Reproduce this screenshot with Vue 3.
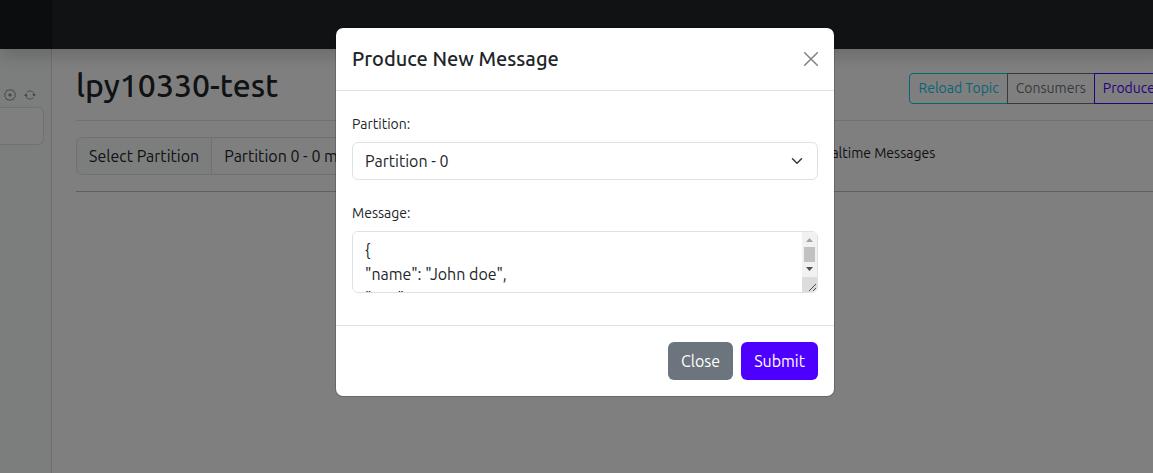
<script setup>
import { ref } from 'vue'

const partition = ref('0')
const target = ref('0')
const realtime = ref(false)
const search = ref('')
const message = ref('{\n"name": "John doe",\n"age": 25\n}')
</script>

<template>
  <div class="page">
    <header class="topbar">
      <div class="brand"></div>
    </header>
    <div class="layout">
      <aside class="sidebar">
        <div class="tools">
          <button class="icon-button" type="button" aria-label="Add topic">
            <svg viewBox="0 0 24 24" fill="none" stroke="currentColor" stroke-width="1.6">
              <path d="M12 1l3 1.600 3.700.2 1.300 3.400 2.600 2.400-.8 3.400.8 3.400-2.600 2.400-1.300 3.400-3.700.2-3 1.600-3-1.600-3.700-.2L4 17.800l-2.600-2.400.8-3.400-.8-3.400L4 6.200l1.300-3.400L9 2.600z" />
              <path d="M12 8.500v7M8.500 12h7" stroke-width="2" />
            </svg>
          </button>
          <button class="icon-button" type="button" aria-label="Refresh topics">
            <svg viewBox="0 0 16 16" fill="currentColor">
              <path d="M11.534 7h3.932a.25.25 0 0 1 .192.410l-1.966 2.360a.25.25 0 0 1-.384 0l-1.966-2.360a.25.25 0 0 1 .192-.410zm-11 2h3.932a.25.25 0 0 0 .192-.410L2.692 6.230a.25.25 0 0 0-.384 0L.342 8.590A.25.25 0 0 0 .534 9z" />
              <path d="M8 3c-1.552 0-2.940.707-3.857 1.818a.5.5 0 1 1-.771-.636A6.002 6.002 0 0 1 13.917 7H12.900A5.002 5.002 0 0 0 8 3zM3.100 9a5.002 5.002 0 0 0 8.757 2.182.5.5 0 1 1 .771.636A6.002 6.002 0 0 1 2.083 9H3.100z" />
            </svg>
          </button>
        </div>
        <input v-model="search" class="search" type="text" aria-label="Filter topics" />
      </aside>
      <main class="content">
        <div class="heading">
          <h1>lpy10330-test</h1>
          <div class="actions">
            <button class="action info" type="button">Reload Topic</button>
            <button class="action muted" type="button">Consumers</button>
            <button class="action primary" type="button">Produce</button>
          </div>
        </div>
        <div class="filters">
          <div class="group">
            <label for="view-partition">Select Partition</label>
            <select id="view-partition" v-model="partition">
              <option value="0">Partition 0 - 0 messages</option>
            </select>
          </div>
          <div class="live">
            <input id="realtime" v-model="realtime" type="checkbox" />
            <label for="realtime">Realtime Messages</label>
          </div>
        </div>
      </main>
    </div>

    <div class="backdrop">
      <form class="modal" role="dialog" aria-labelledby="modal-title" @submit.prevent>
        <div class="modal-header">
          <h2 id="modal-title">Produce New Message</h2>
          <button class="dismiss" type="button" aria-label="Dismiss">
            <svg viewBox="0 0 14 14" fill="none" stroke="currentColor" stroke-width="1.5" stroke-linecap="round">
              <path d="M.7.7l12.600 12.600M13.300.7L.7 13.300" />
            </svg>
          </button>
        </div>
        <div class="modal-body">
          <div class="field">
            <label for="target-partition">Partition:</label>
            <div class="control">
              <select id="target-partition" v-model="target">
                <option value="0">Partition - 0</option>
              </select>
              <svg class="chevron" viewBox="0 0 16 16" fill="none" stroke="#343a40" stroke-width="2" stroke-linecap="round" stroke-linejoin="round">
                <path d="m2 5 6 6 6-6" />
              </svg>
            </div>
          </div>
          <div class="field">
            <label for="message">Message:</label>
            <div class="control">
              <textarea id="message" v-model="message" rows="2"></textarea>
              <svg class="scrollbar" viewBox="0 0 15 60" aria-hidden="true">
                <path d="M0 0h15v45H0z" fill="#f1f1f1" />
                <path d="M7.500 6L11 10H4z" fill="#a3a3a3" />
                <path d="M2 15h11v15H2z" fill="#c1c1c1" />
                <path d="M7.500 39L11 35H4z" fill="#505050" />
                <path d="M0 45h15v15H0z" fill="#dcdcdc" />
                <path d="M7 59l7-7M11 59l3-3" stroke="#505050" stroke-width="1" />
              </svg>
            </div>
          </div>
        </div>
        <div class="modal-footer">
          <button class="button secondary" type="button">Close</button>
          <button class="button submit" type="submit">Submit</button>
        </div>
      </form>
    </div>
  </div>
</template>

<style>
body {
  margin: 0;
  overflow: hidden;
}
</style>

<style scoped>
* {
  box-sizing: border-box;
}
.page {
  position: relative;
  width: calc(100% + 17px);
  min-height: 100vh;
  display: flex;
  flex-direction: column;
  font-family: Ubuntu, "Noto Sans", "Open Sans", sans-serif;
  font-size: 16px;
  line-height: 24px;
  color: #212529;
  background: #fff;
}
button,
input,
select,
textarea {
  font: inherit;
  color: inherit;
  margin: 0;
}
.topbar {
  position: relative;
  z-index: 1;
  height: 49px;
  display: flex;
  background: #212529;
  box-shadow: 0 8px 16px rgba(0, 0, 0, 0.15);
}
.brand {
  width: 52px;
  background: rgba(0, 0, 0, 0.25);
  border-right: 1px solid #111315;
}
.layout {
  flex: 1;
  display: flex;
}
.sidebar {
  flex: 0 0 52px;
  padding-top: 39px;
  background: #f8fcfa;
  border-right: 1px solid #dcdfe2;
}
.tools {
  display: flex;
  gap: 8px;
  padding-left: 4px;
  height: 19px;
}
.icon-button {
  width: 12px;
  height: 14px;
  padding: 1px 0;
  border: 0;
  background: none;
  color: #6c757d;
}
.icon-button svg {
  display: block;
  width: 12px;
  height: 12px;
}
.search {
  display: block;
  width: 44px;
  height: 38px;
  border: 1px solid #dee2e6;
  border-left: 0;
  border-radius: 0 6px 6px 0;
  background: #fff;
}
.content {
  flex: 1;
  min-width: 0;
  padding-left: 24px;
}
.heading {
  display: flex;
  justify-content: space-between;
  align-items: flex-end;
  height: 72px;
  padding: 0 6px 16px 0;
  border-bottom: 1px solid #dee2e6;
}
h1 {
  margin: 0;
  font-size: 32px;
  font-weight: 500;
  line-height: 38px;
}
.actions {
  display: flex;
}
.action {
  height: 31px;
  padding: 4px 8px;
  border: 1px solid currentColor;
  background: none;
  font-size: 14px;
  line-height: 21px;
  white-space: nowrap;
}
.action + .action {
  margin-left: -1px;
}
.info {
  color: #0dcaf0;
  border-radius: 4px 0 0 4px;
}
.muted {
  color: #6c757d;
}
.primary {
  color: #4d00ff;
  border-radius: 0 4px 4px 0;
}
.filters {
  display: flex;
  align-items: flex-start;
  gap: 16px;
  padding: 16px 0;
  border-bottom: 1px solid #bcbec0;
}
.group {
  display: flex;
  flex: 0 1 704px;
  height: 38px;
}
.group label {
  padding: 6px 12px;
  border: 1px solid #dee2e6;
  border-radius: 6px 0 0 6px;
  background: #f8fcfa;
  white-space: nowrap;
}
.group select {
  flex: 1;
  min-width: 0;
  margin-left: -1px;
  padding: 6px 12px;
  appearance: none;
  border: 1px solid #dee2e6;
  border-radius: 0 6px 6px 0;
  background: #fff;
}
.live {
  display: flex;
  align-items: center;
  gap: 6px;
  height: 32px;
  font-size: 14px;
}
.backdrop {
  position: absolute;
  inset: 0;
  z-index: 2;
  padding-top: 27px;
  background: rgba(0, 0, 0, 0.5);
}
.modal {
  max-width: 500px;
  margin: 0 auto;
  border: 1px solid rgba(0, 0, 0, 0.175);
  border-radius: 8px;
  background: #fff;
  background-clip: padding-box;
}
.modal-header {
  display: flex;
  align-items: center;
  justify-content: space-between;
  padding: 16px;
  border-bottom: 1px solid #dee2e6;
}
h2 {
  margin: 0;
  font-size: 20px;
  font-weight: 500;
  line-height: 30px;
}
.dismiss {
  display: flex;
  padding: 0;
  border: 0;
  background: none;
  color: #808080;
}
.dismiss svg {
  width: 14px;
  height: 14px;
}
.modal-body {
  padding: 16px 16px 0;
}
.field {
  padding-bottom: 16px;
}
.field:last-child {
  padding-bottom: 32px;
}
.field label {
  display: block;
  padding: 7px 0;
  font-size: 14px;
  line-height: 21px;
}
.control {
  position: relative;
}
.control select {
  display: block;
  width: 100%;
  height: 38px;
  padding: 6px 36px 6px 12px;
  appearance: none;
  border: 1px solid #dee2e6;
  border-radius: 6px;
  background: #fff;
}
.chevron {
  position: absolute;
  top: 13px;
  right: 15px;
  width: 12px;
  height: 12px;
  pointer-events: none;
}
textarea {
  display: block;
  width: 100%;
  height: 62px;
  padding: 6px 12px;
  overflow-y: scroll;
  resize: none;
  border: 1px solid #dee2e6;
  border-radius: 6px;
  background: #fff;
}
.scrollbar {
  position: absolute;
  top: 1px;
  right: 1px;
  width: 15px;
  height: 60px;
  border-radius: 0 5px 5px 0;
  pointer-events: none;
}
.modal-footer {
  display: flex;
  justify-content: flex-end;
  gap: 8px;
  padding: 16px;
  border-top: 1px solid #dee2e6;
}
.button {
  height: 38px;
  padding: 0 12px;
  border: 1px solid transparent;
  border-radius: 6px;
  color: #fff;
}
.secondary {
  background: #6c757d;
}
.submit {
  background: #4d00ff;
}
</style>
